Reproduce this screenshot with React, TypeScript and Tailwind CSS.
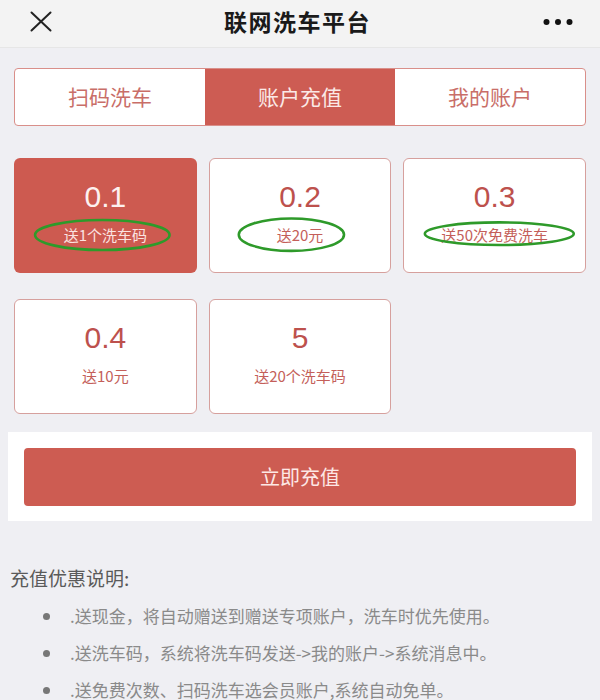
import React from "react";

type Card = {
  amount: string;
  gift: string;
  selected?: boolean;
  ring?: { cx: number; cy: number; rx: number; ry: number };
};

const cards: Card[] = [
  { amount: "0.1", gift: "送1个洗车码", selected: true, ring: { cx: 88, cy: 77, rx: 67, ry: 15 } },
  { amount: "0.2", gift: "送20元", ring: { cx: 82, cy: 77, rx: 53, ry: 16.5 } },
  { amount: "0.3", gift: "送50次免费洗车", ring: { cx: 96, cy: 76, rx: 75, ry: 11.5 } },
  { amount: "0.4", gift: "送10元" },
  { amount: "5", gift: "送20个洗车码" },
];

const tabs = ["扫码洗车", "账户充值", "我的账户"];

const notes = [
  ".送现金，将自动赠送到赠送专项账户，洗车时优先使用。",
  ".送洗车码，系统将洗车码发送->我的账户->系统消息中。",
  ".送免费次数、扫码洗车选会员账户,系统自动免单。",
];

export default function App() {
  return (
    <div
      className="w-[600px] h-[700px] overflow-hidden bg-[#efeff3] relative"
      style={{ fontFamily: '"Noto Sans CJK SC", "Noto Sans", sans-serif' }}
    >
      {/* Header */}
      <div className="h-[48px] bg-[#f3f3f3] border-b border-[#e6e6e6] flex items-center justify-between px-[30px]">
        <svg width="22" height="21" viewBox="0 0 22 21" className="mt-[-4px]">
          <line x1="1.5" y1="1.5" x2="20.5" y2="19.5" stroke="#222" strokeWidth="2" strokeLinecap="round" />
          <line x1="20.5" y1="1.5" x2="1.5" y2="19.5" stroke="#222" strokeWidth="2" strokeLinecap="round" />
        </svg>
        <div className="text-[23px] font-semibold text-[#1a1a1a] tracking-[1.5px] mt-[-4px]">联网洗车平台</div>
        <svg width="30" height="8" viewBox="0 0 30 8" className="mt-[-4px] mr-[-3px]">
          <circle cx="3.5" cy="4" r="3" fill="#111" />
          <circle cx="15" cy="4" r="3" fill="#111" />
          <circle cx="26.5" cy="4" r="3" fill="#111" />
        </svg>
      </div>

      {/* Tabs */}
      <div className="mx-[14px] mt-[20px] h-[58px] flex rounded-[4px] border-[1.5px] border-[#d98f8a] bg-white overflow-hidden">
        {tabs.map((t, i) => (
          <div
            key={t}
            className={
              i === 1
                ? "flex-1 flex items-center justify-center bg-[#cd5c53] text-[#fbe9e7] text-[21px]"
                : "flex-1 flex items-center justify-center text-[#c96e68] text-[21px]"
            }
          >
            {t}
          </div>
        ))}
      </div>

      {/* Cards */}
      <div className="grid grid-cols-3 gap-x-[12px] gap-y-[26px] px-[14px] mt-[32px]">
        {cards.map((c) => (
          <div
            key={c.amount}
            className={
              c.selected
                ? "relative h-[115px] rounded-[6px] bg-[#cd5a50] flex flex-col items-center pt-[21px]"
                : "relative h-[115px] rounded-[6px] bg-white border-[1.5px] border-[#d6a09d] flex flex-col items-center pt-[20px]"
            }
          >
            <div
              className={
                c.selected
                  ? "text-[30px] leading-[36px] text-[#fdf1f0]"
                  : "text-[30px] leading-[36px] text-[#bd514d]"
              }
              style={{ fontFamily: '"Liberation Sans", Arial, sans-serif' }}
            >
              {c.amount}
            </div>
            <div
              className={
                c.selected
                  ? "mt-[10px] text-[15px] leading-[20px] text-[#fbe3e1]"
                  : "mt-[10px] text-[15px] leading-[20px] text-[#c45f5a]"
              }
            >
              {c.gift}
            </div>
            {c.ring && (
              <svg className="absolute inset-0 w-full h-full pointer-events-none" viewBox="0 0 182 115" preserveAspectRatio="none">
                <ellipse
                  cx={c.ring.cx}
                  cy={c.ring.cy}
                  rx={c.ring.rx}
                  ry={c.ring.ry}
                  fill="none"
                  stroke="#2e9a2a"
                  strokeWidth="2.6"
                />
              </svg>
            )}
          </div>
        ))}
      </div>

      {/* Button section */}
      <div className="mx-[8px] mt-[18px] bg-white px-[16px] pt-[16px] pb-[15px]">
        <div className="h-[58px] rounded-[4px] bg-[#cd5c52] flex items-center justify-center text-[20px] text-[#fde8e6]">
          立即充值
        </div>
      </div>

      {/* Notes */}
      <div className="px-[10px] mt-[45px]">
        <div className="text-[19px] leading-[24px] text-[#5a5a5a]">充值优惠说明:</div>
        <ul className="mt-[14px] flex flex-col gap-[13px]">
          {notes.map((n) => (
            <li key={n} className="flex items-center text-[17px] leading-[24px] text-[#8a8a8a]">
              <span className="w-[7px] h-[7px] rounded-full bg-[#777] ml-[33px] mr-[20px] shrink-0" />
              <span>{n}</span>
            </li>
          ))}
        </ul>
      </div>
    </div>
  );
}
